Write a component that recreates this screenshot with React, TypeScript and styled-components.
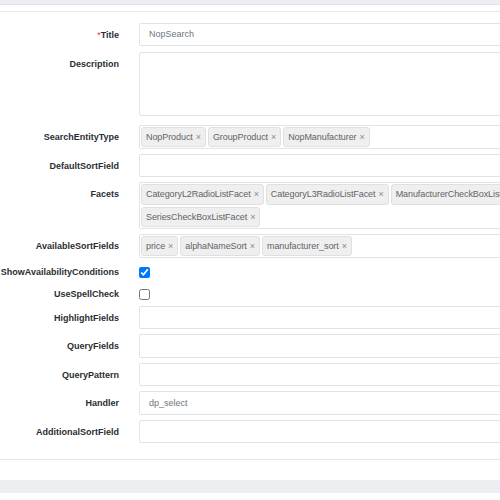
import React from 'react';
import styled, { createGlobalStyle } from 'styled-components';

const GlobalStyle = createGlobalStyle`
  html, body {
    margin: 0;
    padding: 0;
    background: #ffffff;
    overflow: hidden;
  }
  body {
    font-family: 'Liberation Sans', Arial, sans-serif;
  }
`;

const Page = styled.div`
  width: 500px;
  height: 500px;
  overflow: hidden;
  background: #ffffff;
`;

const TopStrip = styled.div`
  height: 4px;
  background: #eceef2;
  border-bottom: 1px solid #dfe2e6;
`;

const Card = styled.div`
  margin-top: 6px;
  border-top: 1px solid #e8eaed;
  border-bottom: 1px solid #e4e6e9;
  padding: 10.5px 0 15.5px;
`;

const BottomStrip = styled.div`
  margin-top: 20px;
  height: 13px;
  background: #eceef2;
`;

const Form = styled.div`
  width: 600px;
  display: flex;
  flex-direction: column;
  gap: 4.5px;
`;

const Row = styled.div<{ $extra?: number }>`
  display: grid;
  grid-template-columns: 119px 1fr;
  column-gap: 20px;
  align-items: start;
  margin-bottom: ${(p) => p.$extra ?? 0}px;
`;

const Label = styled.label<{ $h?: number }>`
  display: flex;
  justify-content: flex-end;
  font-size: 9px;
  font-weight: 700;
  color: #2a2e32;
  line-height: ${(p) => p.$h ?? 24}px;
  white-space: nowrap;
`;

const Required = styled.span`
  color: #dc3545;
  font-weight: 400;
`;

const TextInput = styled.input`
  box-sizing: border-box;
  width: 420px;
  height: 23.5px;
  border: 1px solid #e1e3e6;
  border-radius: 2px;
  padding: 0 9px;
  font-family: 'Liberation Sans', Arial, sans-serif;
  font-size: 9px;
  color: #6c757d;
  background: #ffffff;
  outline: none;
`;

const TextArea = styled.textarea`
  box-sizing: border-box;
  display: block;
  width: 420px;
  height: 64px;
  border: 1px solid #e1e3e6;
  border-radius: 2px;
  resize: none;
  outline: none;
  background: #ffffff;
`;

const TagBox = styled.div`
  box-sizing: border-box;
  width: 420px;
  min-height: 24px;
  border: 1px solid #e1e3e6;
  border-radius: 2px;
  padding: 1px;
  display: flex;
  flex-wrap: wrap;
  gap: 2px;
`;

const Tag = styled.span`
  box-sizing: border-box;
  height: 20.5px;
  display: inline-flex;
  align-items: center;
  padding: 0 4px 0 4px;
  background: #efefef;
  border: 1px solid #e0e0e0;
  border-radius: 3px;
  font-size: 9px;
  letter-spacing: -0.08px;
  color: #5f6368;
  white-space: nowrap;
`;

const Remove = styled.span`
  margin-left: 3px;
  font-size: 9px;
  color: #8a8a8a;
`;

const CheckCell = styled.div`
  height: 17px;
  display: flex;
  align-items: center;
`;

const Check = styled.input`
  margin: 0;
  width: 11px;
  height: 11px;
`;

interface FieldDef {
  label: string;
  kind: 'text' | 'area' | 'tags' | 'check';
  value?: string;
  tags?: string[];
  checked?: boolean;
  required?: boolean;
  extra?: number;
}

const fields: FieldDef[] = [
  { label: 'Title', kind: 'text', value: 'NopSearch', required: true, extra: 1 },
  { label: 'Description', kind: 'area', extra: 4 },
  { label: 'SearchEntityType', kind: 'tags', tags: ['NopProduct', 'GroupProduct', 'NopManufacturer'] },
  { label: 'DefaultSortField', kind: 'text', value: '' },
  {
    label: 'Facets',
    kind: 'tags',
    tags: [
      'CategoryL2RadioListFacet',
      'CategoryL3RadioListFacet',
      'ManufacturerCheckBoxListFacet',
      'SeriesCheckBoxListFacet',
    ],
  },
  { label: 'AvailableSortFields', kind: 'tags', tags: ['price', 'alphaNameSort', 'manufacturer_sort'], extra: 1 },
  { label: 'ShowAvailabilityConditions', kind: 'check', checked: true, extra: 1 },
  { label: 'UseSpellCheck', kind: 'check', checked: false, extra: -2 },
  { label: 'HighlightFields', kind: 'text', value: '' },
  { label: 'QueryFields', kind: 'text', value: '' },
  { label: 'QueryPattern', kind: 'text', value: '' },
  { label: 'Handler', kind: 'text', value: 'dp_select' },
  { label: 'AdditionalSortField', kind: 'text', value: '' },
];

const renderControl = (f: FieldDef) => {
  switch (f.kind) {
    case 'area':
      return <TextArea readOnly />;
    case 'tags':
      return (
        <TagBox>
          {f.tags!.map((t) => (
            <Tag key={t}>
              {t}
              <Remove>×</Remove>
            </Tag>
          ))}
        </TagBox>
      );
    case 'check':
      return (
        <CheckCell>
          <Check type="checkbox" defaultChecked={f.checked} />
        </CheckCell>
      );
    default:
      return <TextInput readOnly value={f.value} />;
  }
};

const App: React.FC = () => {
  return (
    <Page>
      <GlobalStyle />
      <TopStrip />
      <Card>
        <Form>
          {fields.map((f) => (
            <Row key={f.label} $extra={f.extra}>
              <Label $h={f.kind === 'check' ? 17 : 24}>
                {f.required && <Required>*</Required>}
                {f.label}
              </Label>
              {renderControl(f)}
            </Row>
          ))}
        </Form>
      </Card>
      <BottomStrip />
    </Page>
  );
};

export default App;
